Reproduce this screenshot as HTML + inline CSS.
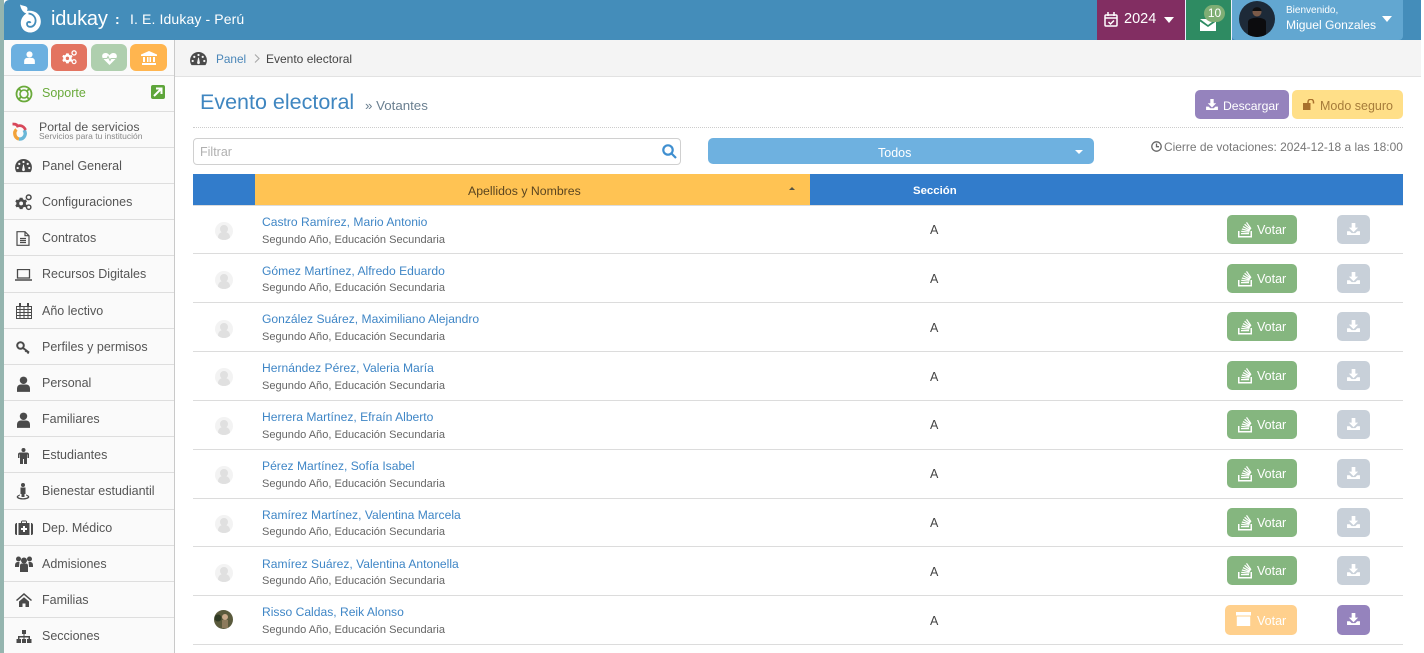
<!DOCTYPE html>
<html lang="es"><head><meta charset="utf-8"><title>Evento electoral</title>
<style>
html,body{margin:0;padding:0;width:1424px;height:653px;overflow:hidden;background:#fff}
body{position:relative;font-family:"Liberation Sans",Arial,sans-serif;color:#555;font-size:12.5px}
.a{position:absolute;white-space:nowrap}
.t{position:absolute;white-space:nowrap;line-height:18px;height:18px}
.ic{position:absolute;fill:#4a4a4a}
.sep{position:absolute;left:4px;width:170px;height:1px;background:#dedede}
.m{position:absolute;left:42px;font-size:12.5px;line-height:18px;color:#555;white-space:nowrap}
.l{position:absolute;left:193px;width:1210px;height:1px;background:#dcdcdc}
.n{position:absolute;left:262px;font-size:12.1px;line-height:18px;color:#3f86c6;white-space:nowrap}
.s{position:absolute;left:262px;font-size:11.05px;line-height:18px;color:#666;white-space:nowrap;margin-top:1px}
.c{position:absolute;left:930px;font-size:12.5px;line-height:18px;color:#444;margin-top:1px}
.av{position:absolute;left:215px;width:18px;height:18px;border-radius:50%;background:#f3f3f3;overflow:hidden}
.av:before{content:"";position:absolute;left:5px;top:3px;width:8px;height:8px;border-radius:50%;background:#e0e0e0}
.av:after{content:"";position:absolute;left:3px;top:10px;width:12px;height:8px;border-radius:5px 5px 0 0;background:#e0e0e0}
.b{position:absolute;border-radius:5px}
.v{left:1227px;width:70px;height:29px;background:#85b67f;color:#fff;font-size:12.5px;line-height:31px}
.v span{position:absolute;left:30px}
.v svg{position:absolute;left:10px;top:6px;fill:#fff}
.d{left:1337px;width:33px;height:29px;background:#c8d0d9}
.d svg{position:absolute;left:10px;top:8px;fill:#fff}
.top{position:absolute;top:44px;height:27px;border-radius:6px}
</style></head><body>
<svg width="0" height="0" style="position:absolute">
<symbol id="dl" viewBox="0 0 14 13"><path d="M5 0h4v5h3L7 10 2 5h3zM0 9h3l2 2h4l2-2h3v4H0z"/></symbol>
<symbol id="gear" viewBox="0 0 18 18"><path fill-rule="evenodd" d="M5 4h3l.4 1.600 1.500.8 1.500-.6 1.300 2.200-1.200 1.100v1.800l1.200 1.100-1.300 2.200-1.500-.6-1.500.8L8 16H5l-.4-1.600-1.500-.8-1.500.6L.3 12l1.200-1.100V9.100L.3 8l1.300-2.200 1.500.6 1.500-.8zM6.500 8a2 2 0 1 0 0 4 2 2 0 0 0 0-4z"/><circle cx="14.500" cy="3.500" r="2.500" fill="none" stroke="currentColor" stroke-width="1.600"/><circle cx="14.500" cy="14" r="2.300" fill="none" stroke="currentColor" stroke-width="1.500"/></symbol>
<symbol id="gauge" viewBox="0 0 18 16"><path fill-rule="evenodd" d="M9 1a9 9 0 0 1 9 9c0 2-.6 3.800-1.600 5H1.600C.6 13.800 0 12 0 10a9 9 0 0 1 9-9zM9 3a1.200 1.200 0 1 0 0 2.400A1.200 1.200 0 0 0 9 3zM4.500 5a1.200 1.200 0 1 0 0 2.400 1.200 1.200 0 0 0 0-2.400zM13.500 5a1.200 1.200 0 1 0 0 2.400 1.200 1.200 0 0 0 0-2.400zM2.800 9.500a1.200 1.200 0 1 0 0 2.400 1.200 1.200 0 0 0 0-2.400zM15.200 9.500a1.200 1.200 0 1 0 0 2.400 1.200 1.200 0 0 0 0-2.400zM8.600 7l-1 5a1.500 1.500 0 1 0 2.800 0l-1-5z"/></symbol>
<symbol id="user" viewBox="0 0 14 17"><circle cx="7" cy="4.500" r="4"/><path d="M0 17v-3.500C0 10.500 2 9 4 9h6c2 0 4 1.500 4 4.500V17z"/></symbol>
<symbol id="vote" viewBox="0 0 17 17"><path d="M1 10h1.500v5h11v-5H15v6.500H1z"/><path d="M4 12h8v1.200H4zM4.300 9.800l8 .8-.1 1.200-8-.8zM5 7.400l7.800 2-.3 1.200-7.800-2zM6.300 5l7 3.700-.6 1.100-7-3.700zM8 2.800l6 5.200-.8.9-6-5.200zM10 1l4.500 6.400-1 .7L9 1.700z"/></symbol>
</svg>

<!-- strips -->
<div class="a" style="left:0;top:0;width:4px;height:653px;background:#95b5af"></div>
<div class="a" style="left:4px;top:40px;width:170px;height:613px;background:#fafafa"></div>
<div class="a" style="left:174px;top:40px;width:1px;height:613px;background:#c9c9c9"></div>

<!-- header -->
<div class="a" style="left:4px;top:0;width:1417px;height:40px;background:#448dba;border-top-left-radius:5px"></div>
<svg class="a" style="left:19px;top:4px" width="23" height="29" viewBox="0 0 23 29"><path fill="#fff" d="M1 .5c1.500 1.200 3.500 1 5.500 1.800 2 .8 2.500 2.500 1.500 4.700C14 5.800 21.500 9 21.800 17c.3 6.500-4.800 11.500-10.500 11.500C6 28.500 1.800 24.500 1.800 19c0-4 2.300-7.500 5.500-9.500C4.500 8.500 2 6 1 .5z"/><path fill="none" stroke="#448dba" stroke-width="1.800" d="M9.500 9.500C15.500 10 18 15.500 15.800 20 13.500 24 8 23.500 8 20c0-2.200 2.800-2.800 3.500-1"/></svg>
<div class="t" style="left:51px;top:8px;font-size:20px;line-height:22px;height:22px;color:#fff;letter-spacing:-.2px">idukay</div>
<div class="t" style="left:115px;top:10px;font-size:14px;color:#fff;font-weight:bold">:</div>
<div class="t" style="left:130px;top:10px;font-size:14px;color:#fff;letter-spacing:.12px">I. E. Idukay - Perú</div>

<div class="a" style="left:1097px;top:0;width:88px;height:40px;background:#822e62"></div>
<svg class="a" style="left:1104px;top:12px" width="14" height="15" viewBox="0 0 14 15" fill="none" stroke="#fff" stroke-width="1.500"><rect x="1" y="3" width="12" height="11" rx="1"/><path d="M1 6h12M4 0v4M10 0v4"/><path d="M4.500 10l2 2 3.500-3.500"/></svg>
<div class="t" style="left:1124px;top:10px;font-size:14.500px;color:#fff">2024</div>
<div class="a" style="left:1164px;top:17px;border:5px solid transparent;border-top:6px solid #fff;border-bottom:0"></div>
<div class="a" style="left:1185px;top:0;width:1px;height:40px;background:#eef"></div>
<div class="a" style="left:1186px;top:0;width:45px;height:40px;background:#2e8b62"></div>
<svg class="a" style="left:1200px;top:18px" width="16" height="13" viewBox="0 0 16 13" fill="#fff"><path d="M0 1h16L8 7zM0 3.500l8 5.500 8-5.500V13H0z"/></svg>
<div class="a" style="left:1204px;top:5px;width:21px;height:17px;border-radius:10px;background:#7fae74;color:#fff;font-size:12px;line-height:17px;text-align:center">10</div>
<div class="a" style="left:1231px;top:0;width:1px;height:40px;background:#eef"></div>
<div class="a" style="left:1232px;top:0;width:171px;height:40px;background:#62a7d1;border-radius:0 0 4px 4px"></div>
<svg class="a" style="left:1239px;top:1px" width="36" height="36" viewBox="0 0 36 36"><defs><clipPath id="cp"><circle cx="18" cy="18" r="18"/></clipPath></defs><g clip-path="url(#cp)"><rect width="36" height="36" fill="#1d2a38"/><circle cx="18" cy="11" r="4.500" fill="#7a5a48"/><path d="M13.500 10c0-5 9-5 9 0z" fill="#111"/><path d="M9 36V21c0-3 4-4 9-4.500 5 .5 9 1.500 9 4.500v15z" fill="#0c0c0e"/></g></svg>
<div class="t" style="left:1286px;top:2px;font-size:10px;color:#fff">Bienvenido,</div>
<div class="t" style="left:1286px;top:16px;font-size:12.100px;color:#fff">Miguel Gonzales</div>
<div class="a" style="left:1382px;top:16px;border:5px solid transparent;border-top:6px solid #fff;border-bottom:0"></div>

<!-- top sidebar buttons -->
<div class="top" style="left:11px;width:37px;background:#6cb0e0"></div>
<svg class="a" style="left:24px;top:51px;fill:#fff" width="11" height="13"><use href="#user"/></svg>
<div class="top" style="left:51px;width:36px;background:#e37461"></div>
<svg class="a" style="left:62px;top:50px;fill:#fff;color:#fff" width="15" height="15"><use href="#gear"/></svg>
<div class="top" style="left:91px;width:36px;background:#afcfae"></div>
<svg class="a" style="left:102px;top:52px" width="15" height="13" viewBox="0 0 15 13"><path fill="#fff" d="M7.500 13L1 6.500C-.8 4.200.4 1 3.500 1c1.800 0 3 1 4 2.200C8.500 2 9.700 1 11.500 1c3.100 0 4.300 3.200 2.500 5.500z"/><path fill="none" stroke="#afcfae" d="M1 6.500h4l1-2 2 4 1-2h5"/></svg>
<div class="top" style="left:130px;width:37px;background:#ffb54f"></div>
<svg class="a" style="left:141px;top:51px" width="16" height="14" viewBox="0 0 16 14" fill="#fff"><path d="M8 0l8 3.500V5H0V3.500zM2 6h2v5H2zM6 6h1.500v5H6zM8.500 6H10v5H8.500zM12 6h2v5h-2zM1 12h14v2H1z"/></svg>

<!-- sidebar -->
<div class="sep" style="top:75px"></div><div class="sep" style="top:111px"></div><div class="sep" style="top:147px"></div><div class="sep" style="top:183px"></div><div class="sep" style="top:219px"></div><div class="sep" style="top:255px"></div><div class="sep" style="top:292px"></div><div class="sep" style="top:328px"></div><div class="sep" style="top:364px"></div><div class="sep" style="top:400px"></div><div class="sep" style="top:436px"></div><div class="sep" style="top:472px"></div><div class="sep" style="top:509px"></div><div class="sep" style="top:545px"></div><div class="sep" style="top:581px"></div><div class="sep" style="top:617px"></div>

<svg class="a" style="left:15px;top:85px" width="18" height="18" viewBox="0 0 18 18" fill="none"><circle cx="9" cy="9" r="7.500" stroke="#6aaa3b" stroke-width="1.800"/><circle cx="9" cy="9" r="4" stroke="#6aaa3b" stroke-width="1.600"/><path d="M3.500 3.500l3 3M14.500 3.500l-3 3M3.500 14.500l3-3M14.500 14.500l-3-3" stroke="#6aaa3b" stroke-width="1.800"/></svg>
<div class="m" style="top:84px;color:#6aaa3b">Soporte</div>
<div class="a" style="left:151px;top:85px;width:14px;height:14px;background:#5ea53a;border-radius:2px"></div>
<svg class="a" style="left:153px;top:87px" width="10" height="10" viewBox="0 0 10 10" fill="none" stroke="#fff" stroke-width="2"><path d="M1 9l7-7M3 1.500h5.500V7"/></svg>

<svg class="a" style="left:12px;top:121px" width="16" height="20" viewBox="0 0 16 20" fill="none"><path d="M4.500 8.500C1.500 11 2.500 17 7 18" stroke="#f2a23a" stroke-width="3.400"/><path d="M7 18c5 .5 8-5 5-9" stroke="#69b7d8" stroke-width="3.400"/><path d="M.5 3c2 0 4 0 5 2 3-1 6.500 0 8 4" stroke="#d8485a" stroke-width="2.800"/></svg>
<div class="t" style="left:39px;top:118px;font-size:12.300px;color:#555">Portal de servicios</div>
<div class="t" style="left:39px;top:127px;font-size:8.500px;color:#888">Servicios para tu institución</div>

<svg class="ic" style="left:15px;top:158px" width="17" height="15"><use href="#gauge"/></svg><div class="m" style="top:157px">Panel General</div>
<svg class="ic" style="left:15px;top:194px;color:#4a4a4a" width="17" height="17"><use href="#gear"/></svg><div class="m" style="top:193px">Configuraciones</div>
<svg class="a" style="left:16px;top:231px" width="14" height="15" viewBox="0 0 14 15" fill="none" stroke="#4a4a4a" stroke-width="1.200"><path d="M1 .7h8l4 4v9.600H1zM9 .7v4h4M4 7.500h6M4 9.500h6M4 11.500h6"/></svg><div class="m" style="top:229px">Contratos</div>
<svg class="a" style="left:15px;top:269px" width="17" height="12" viewBox="0 0 17 12" fill="none" stroke="#4a4a4a"><rect x="2.500" y=".5" width="12" height="8.500" stroke-width="1.300"/><path d="M0 11h17" stroke-width="1.600"/></svg><div class="m" style="top:265px">Recursos Digitales</div>
<svg class="a" style="left:16px;top:303px" width="16" height="16" viewBox="0 0 16 16" fill="none" stroke="#4a4a4a"><path d="M.5 3.500h15v12H.5zM.5 6.500h15M.5 9.500h15M.5 12.500h15M4 3.500v12M8 3.500v12M12 3.500v12"/><path d="M4 0v4M12 0v4" stroke-width="2"/></svg><div class="m" style="top:302px">Año lectivo</div>
<svg class="a" style="left:16px;top:341px" width="15" height="13" viewBox="0 0 15 13" fill="none" stroke="#4a4a4a" stroke-width="2"><circle cx="4.500" cy="4.500" r="3.300"/><path d="M7 7l6 4.500M10.500 9.500l-1 1.500M12.500 11l-1 1.500"/></svg><div class="m" style="top:338px">Perfiles y permisos</div>
<svg class="ic" style="left:17px;top:376px" width="13" height="16"><use href="#user"/></svg><div class="m" style="top:374px">Personal</div>
<svg class="ic" style="left:17px;top:412px" width="13" height="16"><use href="#user"/></svg><div class="m" style="top:410px">Familiares</div>
<svg class="a" style="left:18px;top:448px" width="11" height="16" viewBox="0 0 11 16" fill="#4a4a4a"><circle cx="5.500" cy="2" r="2"/><path d="M2 4.500h7c1 0 2 .6 2 1.800V10H9.500V6.500H9V16H6V11H5v5H2V6.500h-.5V10H0V6.300C0 5.100 1 4.500 2 4.500z"/></svg><div class="m" style="top:446px">Estudiantes</div>
<svg class="a" style="left:16px;top:483px" width="14" height="17" viewBox="0 0 14 17" fill="#4a4a4a"><circle cx="7" cy="2" r="2"/><path d="M4.500 4.500h5V11h-1v3h-3v-3h-1z"/><path d="M4 11.500C2 12 .7 13 .7 14c0 1.500 3 2.500 6.300 2.500S13.300 15.500 13.300 14c0-1-1.300-2-3.300-2.500v1c1 .3 1.800.8 1.800 1.300 0 .7-2 1.400-4.800 1.400s-4.800-.7-4.800-1.400c0-.5.800-1 1.800-1.300z"/></svg><div class="m" style="top:482px">Bienestar estudiantil</div>
<svg class="a" style="left:15px;top:520px" width="18" height="15" viewBox="0 0 18 15"><path fill="#4a4a4a" d="M6 3V1.500L7 .5h4l1 1V3h-1V1.500H7V3zM0 4.500L1 3h1v12H1L0 14zM3.500 3h11v12h-11zM16 3h1l1 1.500V14l-1 1h-1z"/><path fill="#fff" d="M8 6h2v2h2v2h-2v2H8v-2H6V8h2z"/></svg><div class="m" style="top:519px">Dep. Médico</div>
<svg class="a" style="left:15px;top:556px" width="18" height="16" viewBox="0 0 18 16" fill="#4a4a4a"><circle cx="3.500" cy="3" r="2.500"/><circle cx="14.500" cy="3" r="2.500"/><circle cx="9" cy="4.500" r="3"/><path d="M0 10c0-3 1-4 3-4h1.500L4 11H0zM18 10c0-3-1-4-3-4h-1.500l.5 5h4zM5 10c0-2 1-2.500 2-2.500h4c1 0 2 .5 2 2.500v6H5z"/></svg><div class="m" style="top:555px">Admisiones</div>
<svg class="a" style="left:16px;top:593px" width="16" height="14" viewBox="0 0 16 14" fill="#4a4a4a"><path d="M8 0l8 7-1 1-7-6-7 6-1-1zM3 8.500l5-4.300 5 4.300V14H9.500v-3.500h-3V14H3z"/></svg><div class="m" style="top:591px">Familias</div>
<svg class="a" style="left:16px;top:630px" width="16" height="14" viewBox="0 0 16 14" fill="#4a4a4a"><path d="M6 0h4v4H8.500v2H14v3h1.500v4h-4.500V9h1.500V7.500h-4V9H10v4H6V9h1.500V7.500h-4V9H5v4H.5V9H2V6h5.500V4H6z"/></svg><div class="m" style="top:627px">Secciones</div>

<!-- breadcrumb -->
<div class="a" style="left:175px;top:40px;width:1246px;height:36px;background:#f4f4f4"></div>
<div class="a" style="left:175px;top:76px;width:1246px;height:1px;background:#e2e2e2"></div>
<svg class="ic" style="left:189px;top:51px" width="19" height="15"><use href="#gauge"/></svg>
<div class="t" style="left:216px;top:50px;font-size:11.800px;color:#4a86b8">Panel</div>
<svg class="a" style="left:254px;top:54px" width="6" height="9" viewBox="0 0 6 9" fill="none" stroke="#aaa" stroke-width="1.200"><path d="M1 .5l4 4-4 4"/></svg>
<div class="t" style="left:266px;top:50px;font-size:12px;color:#444">Evento electoral</div>

<!-- title -->
<div class="a" style="left:200px;top:88px;font-size:21.500px;line-height:28px;color:#3f86c0">Evento electoral</div>
<div class="t" style="left:365px;top:97px;font-size:13.300px;color:#6a7f90">» Votantes</div>

<div class="b" style="left:1195px;top:90px;width:94px;height:29px;background:#9583bd"></div>
<svg class="a" style="left:1206px;top:99px;fill:#fff" width="12" height="11"><use href="#dl"/></svg>
<div class="t" style="left:1223px;top:97px;font-size:12.200px;color:#fff">Descargar</div>
<div class="b" style="left:1292px;top:90px;width:111px;height:29px;background:#ffdf88"></div>
<svg class="a" style="left:1303px;top:99px" width="12" height="11" viewBox="0 0 12 11"><rect y="4" width="7.500" height="7" fill="#a8702c"/><path d="M5 4V3a2.500 2.500 0 0 1 5.500 0v1.500" fill="none" stroke="#a8702c" stroke-width="1.500"/></svg>
<div class="t" style="left:1320px;top:97px;font-size:12.500px;color:#a67c3a">Modo seguro</div>

<div class="a" style="left:193px;top:127px;width:1210px;border-top:1px dotted #ccc"></div>

<!-- filter -->
<div class="a" style="left:193px;top:138px;width:486px;height:25px;border:1px solid #d0d0d0;border-radius:4px;background:#fff"></div>
<div class="t" style="left:200px;top:143px;font-size:12.500px;color:#b0b0b0">Filtrar</div>
<svg class="a" style="left:662px;top:144px" width="15" height="15" viewBox="0 0 15 15" fill="none" stroke="#3f8fd0" stroke-width="2.200"><circle cx="6" cy="6" r="4.700"/><path d="M9.500 9.500l4.500 4.500"/></svg>
<div class="b" style="left:708px;top:138px;width:386px;height:26px;background:#6eb1e0"></div>
<div class="t" style="left:878px;top:144px;font-size:12.500px;color:#fff">Todos</div>
<div class="a" style="left:1075px;top:150px;border:4px solid transparent;border-top:4px solid #fff;border-bottom:0"></div>
<svg class="a" style="left:1151px;top:141px" width="11" height="11" viewBox="0 0 11 11" fill="none" stroke="#666" stroke-width="1.300"><circle cx="5.500" cy="5.500" r="4.700"/><path d="M5.500 2.500v3.200H8"/></svg>
<div class="t" style="left:1164px;top:138px;font-size:11.950px;color:#777">Cierre de votaciones: 2024-12-18 a las 18:00</div>

<!-- table header -->
<div class="a" style="left:193px;top:174px;width:1210px;height:31px;background:#327ccb"></div>
<div class="a" style="left:255px;top:174px;width:555px;height:31px;background:#ffc353"></div>
<div class="t" style="left:468px;top:182px;font-size:12.300px;color:#5a4520">Apellidos y Nombres</div>
<div class="a" style="left:789px;top:187px;border:3px solid transparent;border-bottom:3px solid #554;border-top:0"></div>
<div class="t" style="left:913px;top:182px;font-size:11.400px;color:#fff;font-weight:bold">Sección</div>

<!-- rows -->
<div class="l" style="top:205px"></div>
<div class="av" style="top:222px"></div>
<div class="n" style="top:213px">Castro Ramírez, Mario Antonio</div><div class="s" style="top:230px">Segundo Año, Educación Secundaria</div><div class="c" style="top:220px">A</div>
<div class="b v" style="top:215px"><svg width="17" height="17"><use href="#vote"/></svg><span>Votar</span></div><div class="b d" style="top:215px"><svg width="13" height="12"><use href="#dl"/></svg></div>
<div class="l" style="top:253px"></div>

<div class="av" style="top:271px"></div>
<div class="n" style="top:262px">Gómez Martínez, Alfredo Eduardo</div><div class="s" style="top:278px">Segundo Año, Educación Secundaria</div><div class="c" style="top:269px">A</div>
<div class="b v" style="top:264px"><svg width="17" height="17"><use href="#vote"/></svg><span>Votar</span></div><div class="b d" style="top:264px"><svg width="13" height="12"><use href="#dl"/></svg></div>
<div class="l" style="top:302px"></div>

<div class="av" style="top:320px"></div>
<div class="n" style="top:310px">González Suárez, Maximiliano Alejandro</div><div class="s" style="top:327px">Segundo Año, Educación Secundaria</div><div class="c" style="top:318px">A</div>
<div class="b v" style="top:312px"><svg width="17" height="17"><use href="#vote"/></svg><span>Votar</span></div><div class="b d" style="top:312px"><svg width="13" height="12"><use href="#dl"/></svg></div>
<div class="l" style="top:351px"></div>

<div class="av" style="top:368px"></div>
<div class="n" style="top:359px">Hernández Pérez, Valeria María</div><div class="s" style="top:376px">Segundo Año, Educación Secundaria</div><div class="c" style="top:367px">A</div>
<div class="b v" style="top:361px"><svg width="17" height="17"><use href="#vote"/></svg><span>Votar</span></div><div class="b d" style="top:361px"><svg width="13" height="12"><use href="#dl"/></svg></div>
<div class="l" style="top:400px"></div>

<div class="av" style="top:417px"></div>
<div class="n" style="top:408px">Herrera Martínez, Efraín Alberto</div><div class="s" style="top:425px">Segundo Año, Educación Secundaria</div><div class="c" style="top:415px">A</div>
<div class="b v" style="top:410px"><svg width="17" height="17"><use href="#vote"/></svg><span>Votar</span></div><div class="b d" style="top:410px"><svg width="13" height="12"><use href="#dl"/></svg></div>
<div class="l" style="top:449px"></div>

<div class="av" style="top:466px"></div>
<div class="n" style="top:457px">Pérez Martínez, Sofía Isabel</div><div class="s" style="top:474px">Segundo Año, Educación Secundaria</div><div class="c" style="top:464px">A</div>
<div class="b v" style="top:459px"><svg width="17" height="17"><use href="#vote"/></svg><span>Votar</span></div><div class="b d" style="top:459px"><svg width="13" height="12"><use href="#dl"/></svg></div>
<div class="l" style="top:498px"></div>

<div class="av" style="top:515px"></div>
<div class="n" style="top:506px">Ramírez Martínez, Valentina Marcela</div><div class="s" style="top:522px">Segundo Año, Educación Secundaria</div><div class="c" style="top:513px">A</div>
<div class="b v" style="top:508px"><svg width="17" height="17"><use href="#vote"/></svg><span>Votar</span></div><div class="b d" style="top:508px"><svg width="13" height="12"><use href="#dl"/></svg></div>
<div class="l" style="top:546px"></div>

<div class="av" style="top:564px"></div>
<div class="n" style="top:555px">Ramírez Suárez, Valentina Antonella</div><div class="s" style="top:571px">Segundo Año, Educación Secundaria</div><div class="c" style="top:562px">A</div>
<div class="b v" style="top:556px"><svg width="17" height="17"><use href="#vote"/></svg><span>Votar</span></div><div class="b d" style="top:556px"><svg width="13" height="12"><use href="#dl"/></svg></div>
<div class="l" style="top:595px"></div>

<svg class="a" style="left:214px;top:610px" width="19" height="19" viewBox="0 0 19 19"><circle cx="9.500" cy="9.500" r="9.500" fill="#5a5a3c"/><circle cx="4" cy="8" r="3.500" fill="#2f3a24"/><circle cx="11" cy="7" r="3" fill="#c9a98a"/><path d="M8 10h6v8H8z" fill="#8c7a5c"/></svg>
<div class="n" style="top:603px">Risso Caldas, Reik Alonso</div><div class="s" style="top:620px">Segundo Año, Educación Secundaria</div><div class="c" style="top:611px">A</div>
<div class="b" style="left:1225px;top:605px;width:72px;height:30px;background:#ffd08d;color:#fff;font-size:12.500px;line-height:32px"><svg class="a" style="left:11px;top:7px" width="15" height="14" viewBox="0 0 15 14" fill="#fff"><path d="M0 0h15v3.500H0zM.8 4.500h13.400V14H.8z"/></svg><span style="position:absolute;left:32px">Votar</span></div>
<div class="b d" style="top:605px;height:30px;background:#9583bd"><svg width="13" height="12"><use href="#dl"/></svg></div>
<div class="l" style="top:644px"></div>
</body></html>
